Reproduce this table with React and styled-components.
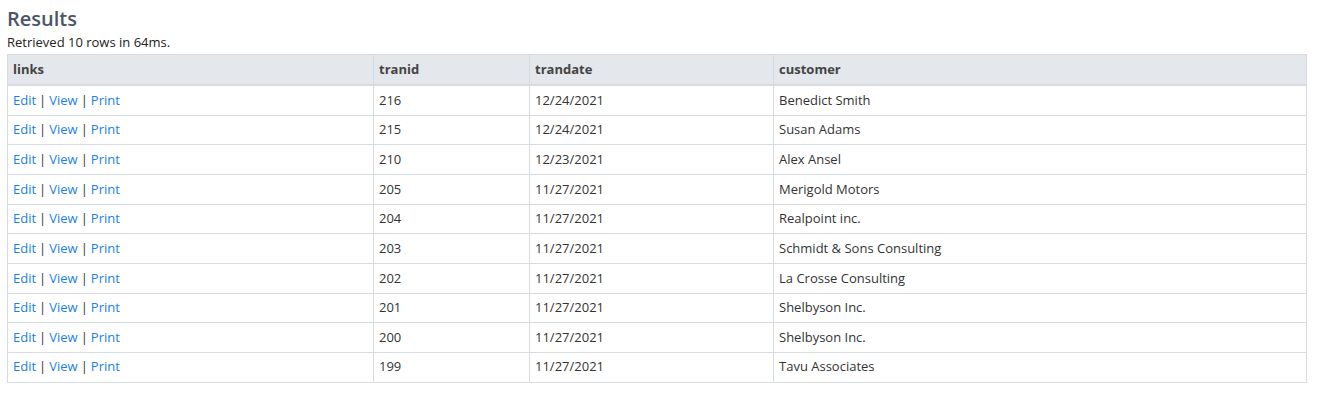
import React from 'react';
import styled, { createGlobalStyle } from 'styled-components';

const GlobalStyle = createGlobalStyle`
  body {
    margin: 0;
    background: #fff;
    font-family: "Open Sans", "Liberation Sans", sans-serif;
    color: #222;
  }
`;

const Page = styled.div`
  padding: 7px 7px 0 7px;
`;

const Title = styled.h2`
  margin: 0;
  font-size: 20px;
  line-height: 24px;
  font-weight: 600;
  color: #4a5568;
`;

const Summary = styled.div`
  margin-top: 2px;
  font-size: 13px;
  line-height: 19.5px;
  color: #222;
`;

const Table = styled.table`
  margin-top: 1px;
  width: 1299px;
  border-collapse: collapse;
  table-layout: fixed;
  font-size: 13px;
  line-height: 19.5px;
  border: 1px solid #d6dbe0;
`;

const Th = styled.th`
  box-sizing: border-box;
  width: ${p => p.w}px;
  text-align: left;
  font-weight: 700;
  color: #444;
  background: #e4e7eb;
  padding: 5px;
  border: 1px solid #d6dbe0;
  border-bottom: 2px solid #d6dbe0;
`;

const Td = styled.td`
  padding: 4.58px 5px;
  color: #333;
  border: 1px solid #d6dbe0;
  white-space: nowrap;
`;

const Link = styled.a`
  color: #1a7fe6;
  text-decoration: none;
  cursor: pointer;
`;

const Sep = styled.span`
  color: #333;
  margin: 0 3px;
`;

const rows = [
  [216, '12/24/2021', 'Benedict Smith'],
  [215, '12/24/2021', 'Susan Adams'],
  [210, '12/23/2021', 'Alex Ansel'],
  [205, '11/27/2021', 'Merigold Motors'],
  [204, '11/27/2021', 'Realpoint inc.'],
  [203, '11/27/2021', 'Schmidt & Sons Consulting'],
  [202, '11/27/2021', 'La Crosse Consulting'],
  [201, '11/27/2021', 'Shelbyson Inc.'],
  [200, '11/27/2021', 'Shelbyson Inc.'],
  [199, '11/27/2021', 'Tavu Associates']
];

export default function App() {
  return (
    <Page>
      <GlobalStyle />
      <Title>Results</Title>
      <Summary>Retrieved 10 rows in 64ms.</Summary>
      <Table>
        <thead>
          <tr>
            <Th w={366}>links</Th>
            <Th w={156}>tranid</Th>
            <Th w={244}>trandate</Th>
            <Th w={533}>customer</Th>
          </tr>
        </thead>
        <tbody>
          {rows.map(([id, date, customer]) => (
            <tr key={id}>
              <Td>
                <Link>Edit</Link>
                <Sep>|</Sep>
                <Link>View</Link>
                <Sep>|</Sep>
                <Link>Print</Link>
              </Td>
              <Td>{id}</Td>
              <Td>{date}</Td>
              <Td>{customer}</Td>
            </tr>
          ))}
        </tbody>
      </Table>
    </Page>
  );
}
